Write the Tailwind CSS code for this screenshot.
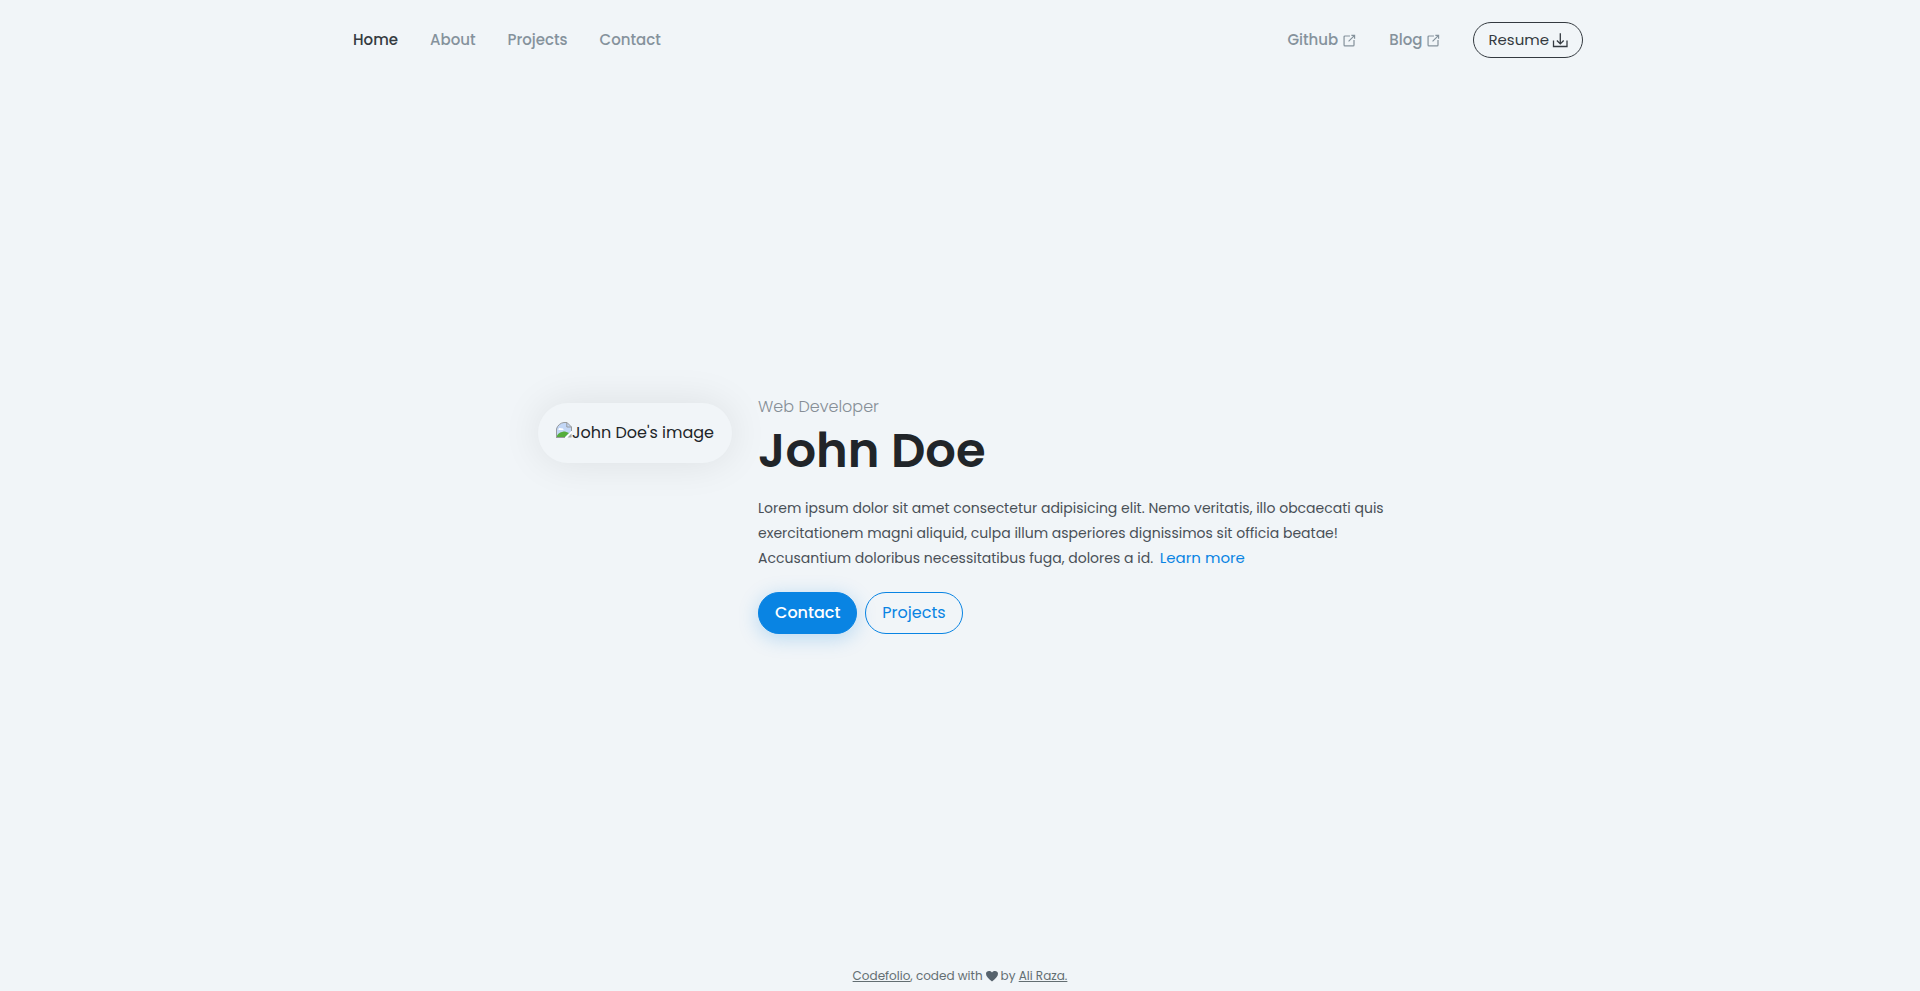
<!DOCTYPE html>
<html lang="en">
<head>
    <meta charset="UTF-8">
    <meta name="viewport" content="width=device-width, initial-scale=1.0">
    <title>John Doe - Web Developer</title>
    <!-- Tailwind CSS CDN -->
    <script src="https://cdn.jsdelivr.net/npm/@tailwindcss/browser@4"></script>
</head>
<body class="min-h-screen flex flex-col bg-[#f1f5f8] text-[#212529] font-['Poppins','Inter',sans-serif]">
    <!-- Header -->
    <header class="w-full max-w-[1246px] mx-auto h-20 flex items-center justify-between">
        <nav class="pl-4 flex items-center gap-8 text-[15px] font-medium text-[#85929c]">
            <a href="#home" class="text-[#343a40]">Home</a>
            <a href="#about">About</a>
            <a href="#projects">Projects</a>
            <a href="#contact">Contact</a>
        </nav>
        <div class="flex items-center gap-8 text-[15px] font-medium text-[#85929c]">
            <a href="#github" class="flex items-center gap-1">
                Github
                <svg class="size-[15px]" viewBox="0 0 16 16" fill="none" stroke="currentColor" stroke-width="1.3">
                    <path d="M8.500 3.200H3.200a1 1 0 0 0-1 1v8.600a1 1 0 0 0 1 1h8.600a1 1 0 0 0 1-1V7.500M10 2.600h3.400V6M13.400 2.600 7 9"/>
                </svg>
            </a>
            <a href="#blog" class="flex items-center gap-1">
                Blog
                <svg class="size-[15px]" viewBox="0 0 16 16" fill="none" stroke="currentColor" stroke-width="1.3">
                    <path d="M8.500 3.200H3.200a1 1 0 0 0-1 1v8.600a1 1 0 0 0 1 1h8.600a1 1 0 0 0 1-1V7.500M10 2.600h3.400V6M13.400 2.600 7 9"/>
                </svg>
            </a>
            <button type="button" class="h-9 px-3.5 flex items-center gap-[3px] rounded-full border border-[#343a40] text-[#343a40] font-normal">
                Resume
                <svg class="size-4" viewBox="0 0 16 16" fill="none" stroke="currentColor" stroke-width="1.3">
                    <path d="M1.500 8.500v6h13.500v-6M8.300 1.300v10.500M4.900 8.500l3.400 3.400 3.400-3.400"/>
                </svg>
            </button>
        </div>
    </header>

    <!-- Hero -->
    <main class="flex-grow pb-[18px] flex items-center justify-center">
        <section class="flex items-start gap-[26px]">
            <div class="mt-2 h-[60px] px-[18px] flex items-center rounded-[30px] bg-[#f1f5f8] shadow-[0_0_40px_rgba(0,0,0,0.09)]">
                <p class="flex items-baseline">
                    <svg class="size-4 shrink-0" viewBox="0 0 16 16">
                        <path d="M0 15.500V7C1 3.500 4 1 8 .5h3L15.500 5v4.500L9.500 15.500z" fill="#c3d7f6"/>
                        <path d="M2.500 8C2 6 4.500 5.500 5 6.500 6.500 5.500 8 7 7.500 8z" fill="#fff"/>
                        <path d="M0 15.500C1.500 11.500 5 9.500 9 9.500l4 1.500-4.500 4.500z" fill="#55ad3c"/>
                        <path d="M16 8.500v2.500L11 16H8.500z" fill="#fff"/>
                        <path d="M11.500 15.500h4v-4z" fill="#a3a8a8"/>
                        <path d="M.5 15.500V7C1.500 3.500 4.500.8 8 .5h3L15.500 5v4M10.800.5V5h4.700M0 15.500h9" fill="none" stroke="#989b9d"/>
                    </svg>
                    <span>John Doe's image</span>
                </p>
            </div>
            <div class="w-[624px]">
                <p class="text-base font-light text-[#868e96]">Web Developer</p>
                <h1 class="mt-1 text-5xl leading-[56px] font-semibold">John Doe</h1>
                <p class="mt-[17px] text-sm leading-[25px] text-[#495057] whitespace-nowrap">
                    Lorem ipsum dolor sit amet consectetur adipisicing elit. Nemo veritatis, illo obcaecati quis<br>
                    exercitationem magni aliquid, culpa illum asperiores dignissimos sit officia beatae!<br>
                    Accusantium doloribus necessitatibus fuga, dolores a id.
                    <a href="#about" class="ml-[3px] text-[15px] leading-none text-[#0984e3]">Learn more</a>
                </p>
                <div class="mt-[21px] flex gap-2 text-base">
                    <button type="button" class="h-[42px] px-4 rounded-full border border-[#0984e3] bg-[#0984e3] text-white font-medium shadow-[0_4px_20px_rgba(9,132,227,0.25)]">Contact</button>
                    <button type="button" class="h-[42px] px-4 rounded-full border border-[#0984e3] text-[#0984e3]">Projects</button>
                </div>
            </div>
        </section>
    </main>

    <!-- Footer -->
    <footer class="pb-1.5 flex items-center justify-center gap-[3px] text-xs leading-[18px] text-[#636e72]">
        <span><a href="#codefolio" class="underline">Codefolio</a>, coded with</span>
        <svg class="size-3" viewBox="0 0 12 12" fill="#57636d">
            <path d="M6 11.500C2.500 8.800 0 6.500 0 3.800 0 .8 4 0 6 2.500 8 0 12 .8 12 3.800c0 2.700-2.500 5-6 7.700z"/>
        </svg>
        <span>by <a href="#author" class="underline">Ali Raza.</a></span>
    </footer>
</body>
</html>
